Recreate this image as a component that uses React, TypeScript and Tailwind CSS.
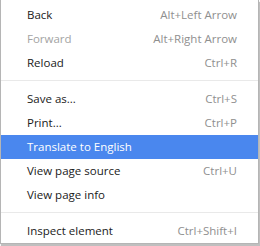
import React from 'react';

type Item = { label: string; shortcut?: string; disabled?: boolean; active?: boolean } | 'sep';

const items: Item[] = [
  { label: 'Back', shortcut: 'Alt+Left Arrow' },
  { label: 'Forward', shortcut: 'Alt+Right Arrow', disabled: true },
  { label: 'Reload', shortcut: 'Ctrl+R' },
  'sep',
  { label: 'Save as...', shortcut: 'Ctrl+S' },
  { label: 'Print...', shortcut: 'Ctrl+P' },
  { label: 'Translate to English', active: true },
  { label: 'View page source', shortcut: 'Ctrl+U' },
  { label: 'View page info' },
  'sep',
  { label: 'Inspect element', shortcut: 'Ctrl+Shift+I' },
];

const App: React.FC = () => {
  return (
    <div className="w-[260px] h-[246px] bg-white">
      <div
        className="w-[259px] pt-[3px] bg-white border-l border-r border-b border-[#b5b5b5] shadow-[1px_2px_1px_rgba(0,0,0,0.25)] text-[11.5px] font-['Open_Sans','Noto_Sans',sans-serif]"
      >
        {items.map((item, i) =>
          item === 'sep' ? (
            <div key={i} className="h-[12px] pt-[5px]">
              <div className="h-px bg-[#e9e9e9]" />
            </div>
          ) : (
            <div
              key={i}
              className={`h-[24px] flex items-center justify-between pl-[26px] pr-[21px] ${
                item.active ? 'bg-[#4a87ee] text-white' : item.disabled ? 'text-[#a3a3a3]' : 'text-[#1a1a1a]'
              }`}
            >
              <span>{item.label}</span>
              {item.shortcut && <span className={item.active ? 'text-white' : 'text-[#8f8f8f]'}>{item.shortcut}</span>}
            </div>
          )
        )}
      </div>
    </div>
  );
};

export default App;
